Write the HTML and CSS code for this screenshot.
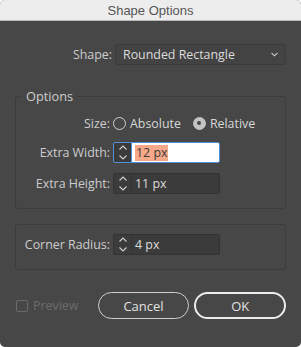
FILE: index.html
```html
<!DOCTYPE html>
<html>
<head>
<meta charset="utf-8">
<link rel="stylesheet" href="styles.css">
</head>
<body>
<div class="window">
  <div class="titlebar">Shape Options</div>
  <div class="content">
    <div class="row shape-row">
      <div class="label">Shape:</div>
      <div class="select">
        <span>Rounded Rectangle</span>
        <svg class="chev" width="7" height="5" viewBox="0 0 7 5"><path d="M0.5 0.8 L3.5 3.8 L6.5 0.8" fill="none" stroke="#cfcfcf" stroke-width="1.1"/></svg>
      </div>
    </div>

    <div class="group group-options">
      <div class="legend">Options</div>
      <div class="row size-row">
        <div class="label">Size:</div>
        <div class="radios">
          <span class="radio"></span><span class="rtext">Absolute</span>
          <span class="radio checked"></span><span class="rtext">Relative</span>
        </div>
      </div>
      <div class="row field-row first">
        <div class="label">Extra Width:</div>
        <div class="numfield focused">
          <div class="stepper">
            <svg width="10" height="17" viewBox="0 0 10 17"><path d="M1.5 5.5 L5 2 L8.5 5.5 M1.5 11.5 L5 15 L8.5 11.5" fill="none" stroke="#d0d0d0" stroke-width="1.1"/></svg>
          </div>
          <div class="value"><span class="sel">12 px</span></div>
        </div>
      </div>
      <div class="row field-row">
        <div class="label">Extra Height:</div>
        <div class="numfield">
          <div class="stepper">
            <svg width="10" height="17" viewBox="0 0 10 17"><path d="M1.5 5.5 L5 2 L8.5 5.5 M1.5 11.5 L5 15 L8.5 11.5" fill="none" stroke="#d0d0d0" stroke-width="1.1"/></svg>
          </div>
          <div class="value">11 px</div>
        </div>
      </div>
    </div>

    <div class="group group-radius">
      <div class="row field-row">
        <div class="label">Corner Radius:</div>
        <div class="numfield">
          <div class="stepper">
            <svg width="10" height="17" viewBox="0 0 10 17"><path d="M1.5 5.5 L5 2 L8.5 5.5 M1.5 11.5 L5 15 L8.5 11.5" fill="none" stroke="#d0d0d0" stroke-width="1.1"/></svg>
          </div>
          <div class="value">4 px</div>
        </div>
      </div>
    </div>

    <div class="footer">
      <div class="preview"><span class="checkbox"></span><span>Preview</span></div>
      <div class="btn cancel">Cancel</div>
      <div class="btn ok">OK</div>
    </div>
  </div>
</div>
</body>
</html>
```

FILE: styles.css
```css
html, body {
  margin: 0;
  padding: 0;
  background: #ffffff;
}
body {
  width: 301px;
  height: 347px;
  overflow: hidden;
  font-family: "Open Sans", "Noto Sans", sans-serif;
  font-size: 12.4px;
}
.window {
  width: 301px;
  height: 347px;
  border-radius: 5px;
  overflow: hidden;
  background: #474747;
  display: flex;
  flex-direction: column;
}
.titlebar {
  height: 21px;
  line-height: 22px;
  background: #ededed;
  border-bottom: 1px solid #b9b9b9;
  box-sizing: border-box;
  text-align: center;
  color: #555555;
  font-family: "Liberation Sans", Arial, sans-serif;
  font-size: 13px;
}
.content {
  padding: 23px 15px 0 15px;
  color: #d2d2d2;
}
.row {
  display: flex;
  align-items: center;
}
.label {
  width: 97px;
  text-align: right;
  padding-right: 3px;
  box-sizing: border-box;
  flex: none;
  color: #cdcdcd;
}
.shape-row .label {
  width: 100px;
}
.select {
  width: 171px;
  height: 21px;
  box-sizing: border-box;
  border: 1px solid #3b3b3b;
  border-radius: 2px;
  background: #434343;
  display: flex;
  align-items: center;
  justify-content: space-between;
  padding: 0 7px 0 7px;
  color: #dcdcdc;
}
.chev {
  display: block;
}
.group {
  border: 1px solid #3c3c3c;
  border-radius: 3px;
  position: relative;
}
.group-options {
  margin-top: 31px;
  padding: 16px 0 14px 0;
}
.legend {
  position: absolute;
  left: 6px;
  top: -10px;
  padding: 0 4px;
  background: #474747;
  color: #cdcdcd;
  font-size: 12.8px;
  line-height: 18px;
}
.size-row {
  height: 20px;
}
.radios {
  display: flex;
  align-items: center;
}
.radio {
  width: 13px;
  height: 13px;
  box-sizing: border-box;
  border: 1px solid #cfcfcf;
  border-radius: 50%;
  margin-right: 4px;
  flex: none;
}
.radio.checked {
  background: #c4c4c4;
  border-color: #c4c4c4;
  position: relative;
}
.radio.checked::after {
  content: "";
  position: absolute;
  left: 3.5px;
  top: 3.5px;
  width: 4px;
  height: 4px;
  border-radius: 50%;
  background: #474747;
}
.rtext {
  margin-right: 12px;
  color: #d8d8d8;
}
.field-row {
  margin-top: 10px;
}
.field-row.first {
  margin-top: 9px;
}
.numfield {
  width: 107px;
  height: 21px;
  box-sizing: border-box;
  border: 1px solid #333333;
  border-radius: 2px;
  display: flex;
  background: #3b3b3b;
  overflow: hidden;
}
.stepper {
  width: 17px;
  border-right: 1px solid #333333;
  display: flex;
  align-items: center;
  justify-content: center;
  flex: none;
}
.stepper svg {
  display: block;
}
.value {
  flex: 1;
  display: flex;
  align-items: center;
  padding-left: 3px;
  color: #dcdcdc;
}
.numfield.focused {
  border-color: #4e8fd8;
}
.numfield.focused .stepper {
  border-right-color: #4e8fd8;
}
.numfield.focused .value {
  background: #ffffff;
  padding-left: 3px;
}
.sel {
  background: #f6a888;
  color: #3a3a3a;
  line-height: 16px;
  padding: 0 1px;
}
.group-radius {
  margin-top: 15px;
  padding: 9px 0 14px 0;
}
.group-radius .field-row {
  margin-top: 0;
}
.footer {
  margin-top: 22px;
  display: flex;
  align-items: center;
}
.preview {
  display: flex;
  align-items: center;
  width: 82px;
  color: #6c6c6c;
  padding-left: 1px;
}
.checkbox {
  width: 12px;
  height: 12px;
  box-sizing: border-box;
  border: 1px solid #6a6a6a;
  border-radius: 2px;
  margin-right: 5px;
}
.btn {
  width: 92px;
  height: 27px;
  box-sizing: border-box;
  border-radius: 14px;
  display: flex;
  align-items: center;
  justify-content: center;
  color: #e2e2e2;
  font-size: 13px;
}
.cancel {
  border: 1px solid #cfcfcf;
  margin-right: 5px;
}
.ok {
  border: 2px solid #ececec;
}
```
